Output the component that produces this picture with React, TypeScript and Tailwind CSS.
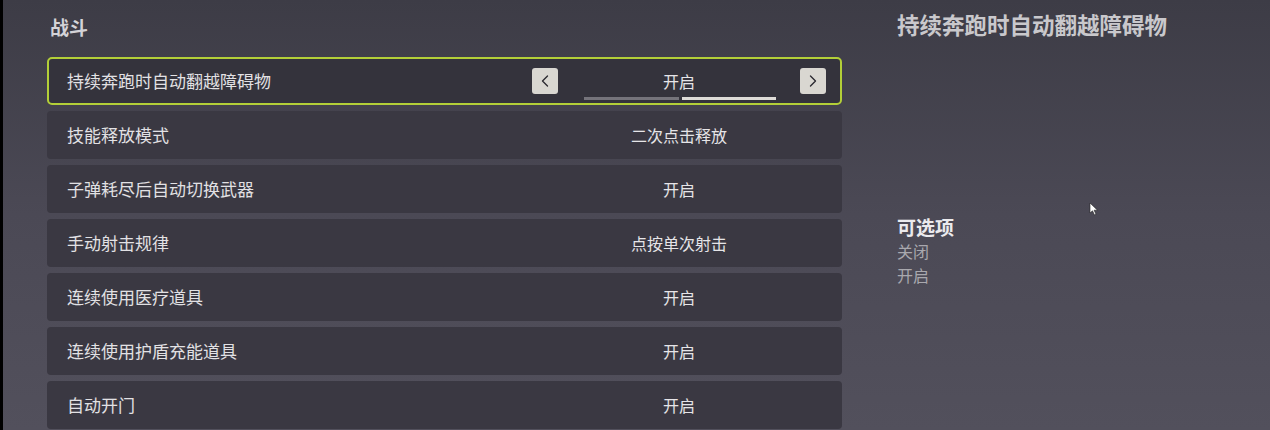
import { ChevronLeft, ChevronRight } from 'lucide-react';

const rows = [
  { label: '持续奔跑时自动翻越障碍物', value: '开启', active: true },
  { label: '技能释放模式', value: '二次点击释放' },
  { label: '子弹耗尽后自动切换武器', value: '开启' },
  { label: '手动射击规律', value: '点按单次射击' },
  { label: '连续使用医疗道具', value: '开启' },
  { label: '连续使用护盾充能道具', value: '开启' },
  { label: '自动开门', value: '开启' },
];

function Row({ label, value, active }: { label: string; value: string; active?: boolean }) {
  return (
    <div
      className={
        active
          ? 'flex h-[48px] items-center rounded-[5px] border-2 border-[#b3cf38] bg-[#34333c] pl-[18px] pr-[14px]'
          : 'flex h-[48px] items-center rounded-[4px] bg-[#3a3842] pl-[20px] pr-[16px]'
      }
    >
      <div className="w-[465px] text-[17px] text-[#e2e1e4]">{label}</div>
      <div className="relative flex h-full flex-1 items-center justify-between">
        {active ? (
          <button className="flex h-[26px] w-[26px] items-center justify-center rounded-[3px] bg-[#d9d7d1] text-[#2a2930]">
            <ChevronLeft size={20} strokeWidth={1.6} />
          </button>
        ) : (
          <span className="w-[26px]" />
        )}
        <span className="text-[16px] text-[#e6e5e8]">{value}</span>
        {active ? (
          <button className="flex h-[26px] w-[26px] items-center justify-center rounded-[3px] bg-[#d9d7d1] text-[#2a2930]">
            <ChevronRight size={20} strokeWidth={1.6} />
          </button>
        ) : (
          <span className="w-[26px]" />
        )}
        {active && (
          <div className="absolute bottom-[3px] left-[52px] flex w-[192px] gap-[3px]">
            <div className="h-[3px] flex-1 bg-[#75747b]" />
            <div className="h-[3px] flex-1 bg-[#dedcd8]" />
          </div>
        )}
      </div>
    </div>
  );
}

export default function App() {
  return (
    <div
      className="relative flex h-[430px] w-[1270px] overflow-hidden bg-gradient-to-b from-[#3d3c46] via-[#4b4955] to-[#52505c]"
      style={{ fontFamily: '"Noto Sans CJK SC", "Noto Sans", sans-serif' }}
    >
      <div className="w-[3px] shrink-0 bg-black" />

      {/* 左侧设置列表 */}
      <div className="ml-[44px] w-[795px] shrink-0 pt-[13px]">
        <h2 className="mb-[17px] pl-[3px] text-[19px] leading-[27px] font-bold text-[#d4d3d8]">战斗</h2>
        <div className="flex flex-col gap-[6px]">
          {rows.map((r) => (
            <Row key={r.label} {...r} />
          ))}
        </div>
      </div>

      {/* 右侧说明 */}
      <div className="ml-[55px] flex flex-col pt-[8px]">
        <h1 className="text-[22.5px] leading-[32px] font-bold text-[#c9c8cc]">持续奔跑时自动翻越障碍物</h1>
        <div className="mt-[175px] text-[19px] leading-[24px] font-bold text-[#ebeaed]">可选项</div>
        <div className="text-[16px] leading-[24px] text-[#a9a8ae]">关闭</div>
        <div className="text-[16px] leading-[24px] text-[#a9a8ae]">开启</div>
      </div>

      {/* 鼠标指针 */}
      <svg className="absolute left-[1089px] top-[202px]" width="10" height="14" viewBox="0 0 10 14">
        <path d="M1 1 L1 11 L3.5 8.8 L5.5 13 L7 12.3 L5.1 8.2 L8.5 8.2 Z" fill="#ffffff" stroke="#222" strokeWidth="0.6" />
      </svg>
    </div>
  );
}
